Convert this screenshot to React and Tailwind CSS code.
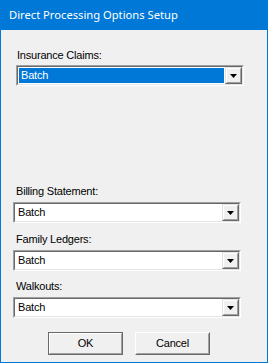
import React from 'react';

const Combo = ({ value, selected, className = '' }) => (
  <div className={`h-[21px] w-[228px] border border-t-[#a0a0a0] border-l-[#a0a0a0] border-b-white border-r-white ${className}`}>
    <div className="h-full w-full border border-t-[#696969] border-l-[#696969] border-b-[#e3e3e3] border-r-[#e3e3e3] bg-white flex">
      <div className="flex-1 p-px flex">
        <div className={`flex-1 flex items-center pl-[2px] ${selected ? 'bg-[#0078d7] text-white' : 'text-black'}`}>
          {value}
        </div>
      </div>
      <div className="w-[17px] h-full border border-t-[#e3e3e3] border-l-[#e3e3e3] border-b-[#696969] border-r-[#696969]">
        <div className="h-full w-full bg-[#f0f0f0] border border-t-white border-l-white border-b-[#a0a0a0] border-r-[#a0a0a0] flex items-center justify-center">
          <svg width="7" height="4" viewBox="0 0 7 4">
            <path d="M0 0h7L3.5 4z" fill="#000" />
          </svg>
        </div>
      </div>
    </div>
  </div>
);

const Btn = ({ children, isDefault }) => (
  <div className={`w-[75px] h-[23px] border ${isDefault ? 'border-[#696969]' : 'border-t-white border-l-white border-b-[#696969] border-r-[#696969]'}`}>
    <div className={`h-full w-full border ${isDefault ? 'border-t-white border-l-white border-b-[#a0a0a0] border-r-[#a0a0a0]' : 'border-t-[#f0f0f0] border-l-[#f0f0f0] border-b-[#a0a0a0] border-r-[#a0a0a0]'} bg-[#f0f0f0] flex items-center justify-center`}>
      {children}
    </div>
  </div>
);

export default function App() {
  return (
    <div className="w-[268px] h-[363px] bg-[#0078d7] px-px pb-px flex flex-col">
      <div
        className="h-[30px] shrink-0 flex items-center pl-[8px] text-white text-[11.2px]"
        style={{ fontFamily: '"Noto Sans", "Open Sans", sans-serif' }}
      >
        Direct Processing Options Setup
      </div>
      <div
        className="flex-1 bg-[#f0f0f0] flex flex-col text-[11px] leading-[13px] text-black tracking-[-0.2px]"
        style={{ fontFamily: '"Liberation Sans", Arial, sans-serif' }}
      >
        <div className="mt-[19px] ml-[16px] h-[13px]">Insurance Claims:</div>
        <Combo value="Batch" selected className="mt-[3px] ml-[15px]" />

        <div className="mt-[99px] ml-[15px] h-[13px]">Billing Statement:</div>
        <Combo value="Batch" className="mt-[4px] ml-[12px]" />

        <div className="mt-[10px] ml-[15px] h-[13px]">Family Ledgers:</div>
        <Combo value="Batch" className="mt-[4px] ml-[12px]" />

        <div className="mt-[9px] ml-[15px] h-[13px]">Walkouts:</div>
        <Combo value="Batch" className="mt-[4px] ml-[12px]" />

        <div className="mt-[14px] ml-[47px] flex gap-[12px]">
          <Btn isDefault>OK</Btn>
          <Btn>Cancel</Btn>
        </div>
      </div>
    </div>
  );
}
